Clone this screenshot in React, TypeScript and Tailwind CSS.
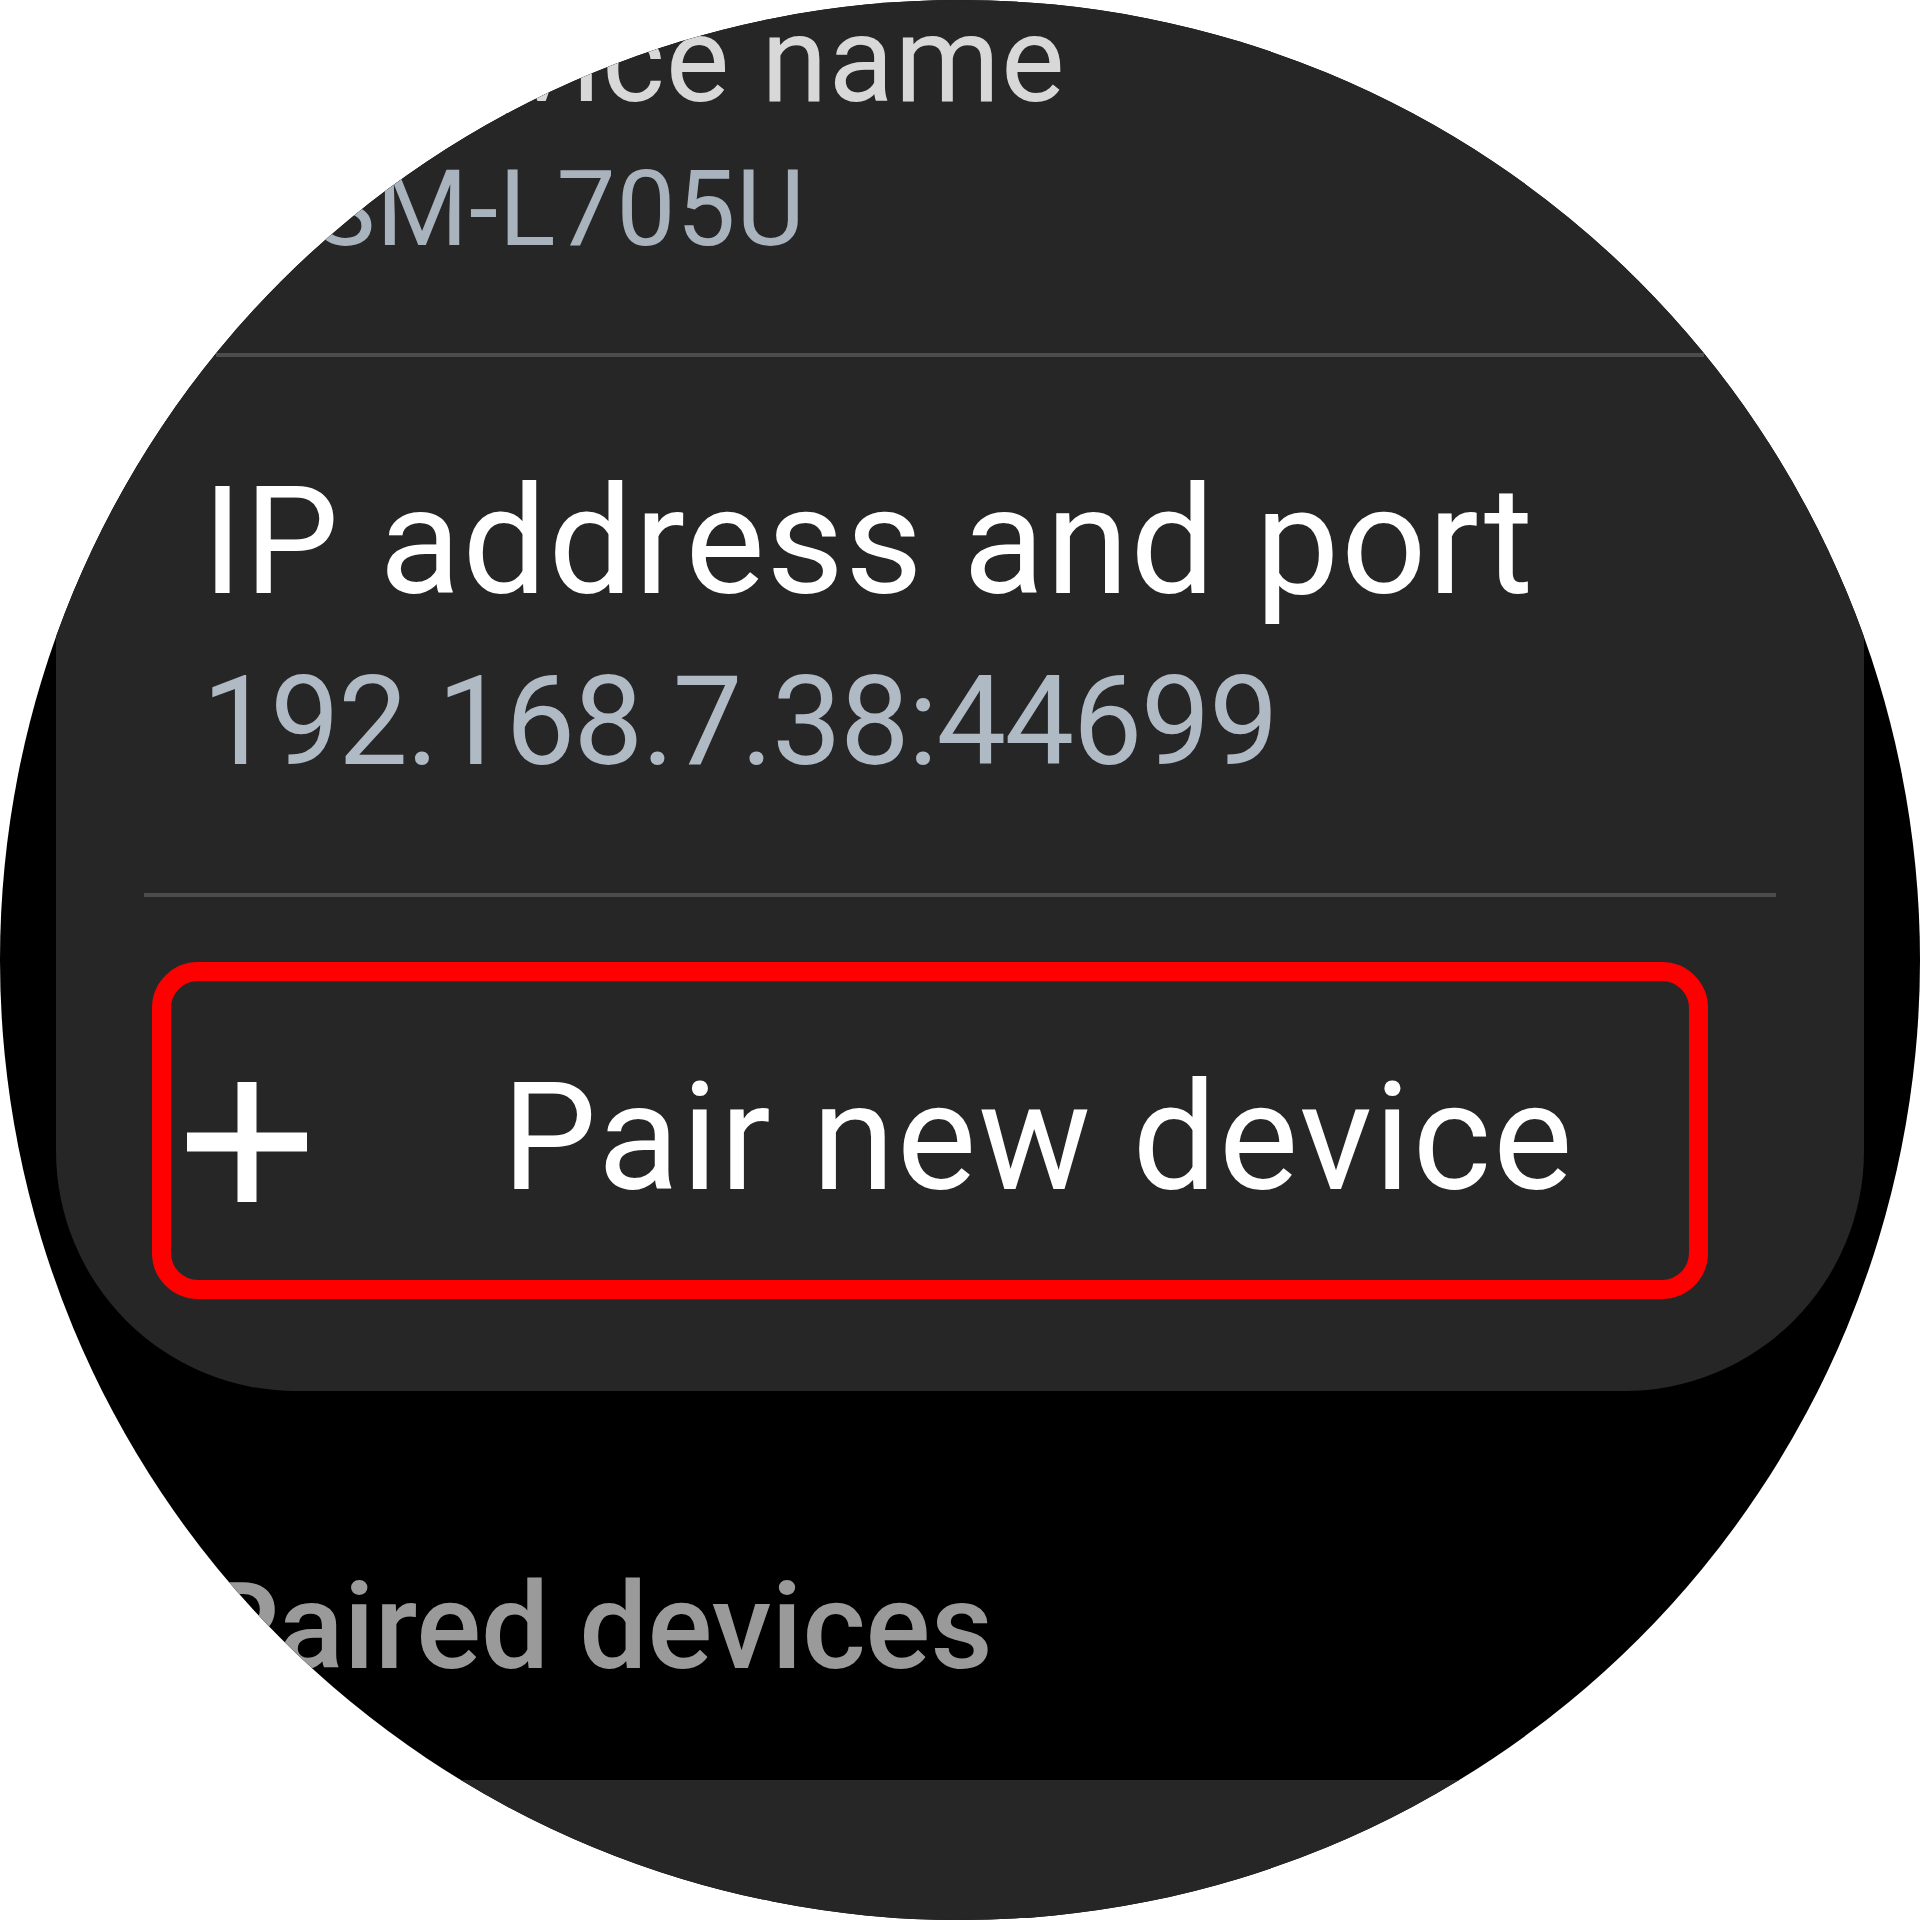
const font = { fontFamily: "Roboto, 'Noto Sans', sans-serif" };

function PlusIcon() {
  return (
    <svg width="120" height="120" viewBox="0 0 120 120" className="shrink-0">
      <line x1="60" y1="0" x2="60" y2="120" stroke="#ffffff" strokeWidth="19" />
      <line x1="0" y1="60" x2="120" y2="60" stroke="#ffffff" strokeWidth="19" />
    </svg>
  );
}

export default function App() {
  return (
    <div className="w-[1920px] h-[1920px] bg-white" style={font}>
      <div className="w-[1920px] h-[1920px] rounded-full overflow-hidden bg-black flex flex-col items-center">
        {/* settings list card */}
        <div className="w-[1808px] shrink-0 bg-[#262626] rounded-b-[240px] flex flex-col pb-[92px]">
          <div className="pl-[313px] text-[120px] leading-none tracking-[1px] text-[#d8d8d8] whitespace-nowrap">
            Device name
          </div>
          <div className="mt-[37px] pl-[257px] text-[105px] leading-none tracking-[1px] text-[#a9b3bd] whitespace-nowrap">
            SM-L705U
          </div>
          <div className="mt-[91px] self-center w-[1488px] h-[4px] bg-[#4c4c4c]" />

          <div className="mt-[110px] pl-[146px] text-[150px] leading-none tracking-[1.5px] text-white whitespace-nowrap">
            IP address and port
          </div>
          <div className="mt-[43px] pl-[146px] text-[124px] leading-none tracking-[-1.6px] text-[#b0bac4] whitespace-nowrap">
            192.168.7.38:44699
          </div>
          <div className="mt-[109px] self-center w-[1632px] h-[4px] bg-[#4c4c4c]" />

          <div className="mt-[65px] ml-[96px] w-[1556px] h-[337px] rounded-[46px] border-[19px] border-[#ff0000] flex items-center pl-[16px]">
            <div className="mt-[23px]">
              <PlusIcon />
            </div>
            <div className="ml-[195px] mt-[15px] text-[150px] leading-none tracking-[2px] text-white whitespace-nowrap">
              Pair new device
            </div>
          </div>
        </div>

        <div className="mt-[176px] w-[1808px] pl-[146px] text-[121px] leading-none font-medium text-[#9a9a9a] whitespace-nowrap">
          Paired devices
        </div>

        <div className="mt-[92px] w-[1808px] h-[300px] shrink-0 bg-[#262626] rounded-t-[240px]" />
      </div>
    </div>
  );
}
